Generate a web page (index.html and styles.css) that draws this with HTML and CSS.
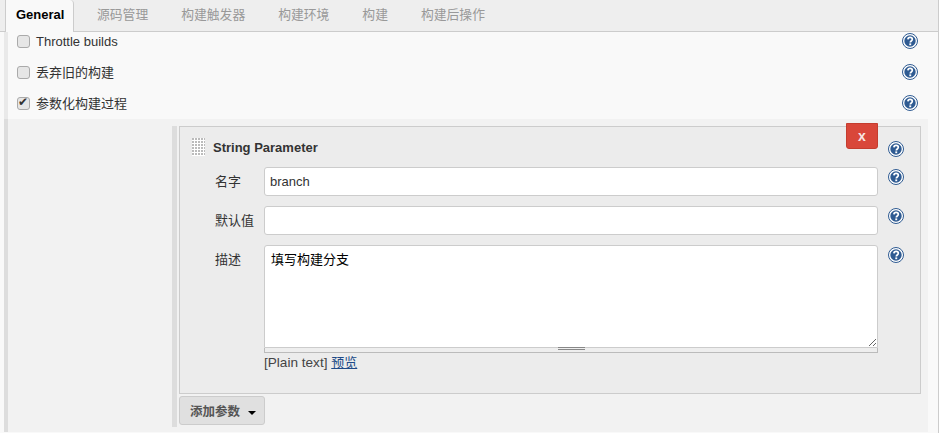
FILE: index.html
```html
<!DOCTYPE html>
<html lang="zh">
<head>
<meta charset="utf-8">
<title>General</title>
<link rel="stylesheet" href="styles.css">
</head>
<body>
<svg class="defs" width="0" height="0" aria-hidden="true">
  <symbol id="help" viewBox="0 0 16 16">
    <circle cx="8" cy="8" r="7.5" fill="#fff" stroke="#2f5b92"/>
    <circle cx="8" cy="8" r="5.7" fill="#2f5b92"/>
    <path d="M5.9 6.4C6 5 7 4.4 8.1 4.4c1.3 0 2.2.8 2.2 1.9 0 1.7-2 1.6-2 3.2" fill="none" stroke="#fff" stroke-width="1.7"/>
    <rect x="7.3" y="10.4" width="1.9" height="1.8" fill="#fff"/>
  </symbol>
</svg>
<div class="page">
  <nav class="tabs">
    <a class="tab active">General</a>
    <a class="tab">源码管理</a>
    <a class="tab">构建触发器</a>
    <a class="tab">构建环境</a>
    <a class="tab">构建</a>
    <a class="tab">构建后操作</a>
  </nav>
  <div class="content">
    <div class="opts">
      <div class="opt">
        <label class="check"><input type="checkbox"><span>Throttle builds</span></label>
        <svg class="help"><use href="#help"/></svg>
      </div>
      <div class="opt">
        <label class="check"><input type="checkbox"><span>丢弃旧的构建</span></label>
        <svg class="help"><use href="#help"/></svg>
      </div>
      <div class="opt">
        <label class="check"><input type="checkbox" checked><span>参数化构建过程</span></label>
        <svg class="help"><use href="#help"/></svg>
      </div>
    </div>
    <section class="params">
      <div class="repeat">
        <div class="card">
          <div class="card-head">
            <span class="grip"></span>
            <b class="card-title">String Parameter</b>
            <button class="del">x</button>
            <svg class="help"><use href="#help"/></svg>
          </div>
          <div class="field">
            <span class="name">名字</span>
            <input class="text" type="text" value="branch">
            <svg class="help"><use href="#help"/></svg>
          </div>
          <div class="field">
            <span class="name">默认值</span>
            <input class="text" type="text">
            <svg class="help"><use href="#help"/></svg>
          </div>
          <div class="field area-field">
            <span class="name">描述</span>
            <div class="area-wrap">
              <textarea class="area">填写构建分支</textarea>
              <div class="grabber"><i></i></div>
              <div class="format">[Plain text] <a href="#">预览</a></div>
            </div>
            <svg class="help"><use href="#help"/></svg>
          </div>
        </div>
        <button class="add">添加参数<i class="caret"></i></button>
      </div>
    </section>
  </div>
</div>
</body>
</html>
```
FILE: styles.css
```css
* { box-sizing: border-box; }
html, body { margin: 0; height: 100%; background: #fff; overflow: hidden; }
body { font: 13px "Liberation Sans", "Noto Sans CJK SC", sans-serif; color: #333; }
.defs { position: absolute; }
.page { width: 939px; height: 433px; border-right: 1px solid #ccc; background: #f9f9f9; }
.tabs { display: flex; height: 32px; padding-left: 5px; background: #eee; border-bottom: 1px solid #ccc; }
.tab { height: 32px; padding: 7px 11px 0; margin-right: 11px; font-size: 12.8px; line-height: 16px; color: #999; }
.tab.active { width: 69px; margin-right: 12px; padding: 7px 0 0 10px; background: #f9f9f9; border: 1px solid #ccc; border-bottom: 0; border-top: 0; border-radius: 0 4px 0 0; color: #000; font-size: 13px; font-weight: bold; }
.content { height: 400px; padding-left: 4px; }
.opts { display: flex; flex-direction: column; gap: 6px; height: 87px; padding: 0 20px 0 9px; border-left: 4px solid #e9e9e9; }
.opt { display: flex; align-items: flex-start; justify-content: space-between; height: 25px; padding-top: 1px; }
.check { display: flex; align-items: flex-start; line-height: 17px; }
.check input { appearance: none; position: relative; width: 13px; height: 13px; margin: 2px 6px 0 0; border: 1px solid #aaa; border-radius: 3px; background: #e6e6e6; }
.check input:checked::after { content: "✔"; position: absolute; left: 0; top: -3px; font: 12px/14px "DejaVu Sans", sans-serif; color: #333; }
.help { width: 16px; height: 16px; flex: none; }
.params { height: 313px; margin-right: 10px; padding: 7px 0 0 164px; background: #f2f2f2; border-left: 4px solid #ddd; }
.repeat { height: 301px; width: 749px; padding-left: 2px; border-left: 5px solid #ddd; }
.card { width: 742px; height: 268px; border: 1px solid #ccc; background: #ececec; position: relative; }
.card-head { display: flex; align-items: center; height: 40px; padding-left: 12px; }
.grip { width: 13px; height: 18px; margin-right: 8px; background-color: #fff; background-image: linear-gradient(90deg, transparent 2px, #fff 2px), linear-gradient(#bbb 2px, #fff 2px); background-size: 3px 3px; }
.card-title { font-size: 13px; color: #333; }
.del { position: absolute; top: -4px; right: 42px; width: 32px; height: 26px; border: 1px solid #c43d2f; border-radius: 0 0 3px 3px; background: #d9473a; color: #f7e6e3; font: bold 14px "Liberation Sans", sans-serif; padding: 0; }
.card-head .help { position: absolute; top: 14px; right: 16px; }
.field { display: flex; height: 39px; padding-left: 35px; }
.name { width: 49px; padding-top: 4px; font-size: 13px; }
.text { width: 614px; height: 29px; border: 1px solid #ccc; border-radius: 3px; padding: 0 5px; font: 13px "Liberation Sans", sans-serif; color: #333; background: #fff; }
.field .help { margin: 2px 0 0 10px; }
.area-wrap { width: 614px; }
.area { display: block; width: 614px; height: 103px; border: 1px solid #ccc; border-radius: 3px 3px 0 0; padding: 3px 6px; font: 13px "Liberation Sans", "Noto Sans CJK SC", sans-serif; color: #000; background: #fff; }
.grabber { height: 5px; background: #eee; border: 1px solid #bbb; border-top: 0; display: flex; justify-content: center; }
.grabber i { display: block; width: 27px; height: 3px; border-top: 1px solid #888; border-bottom: 1px solid #888; margin-top: -1px; }
.format { margin-top: 2px; font-size: 13.6px; line-height: 16px; color: #444; }
.format a { font-size: 13px; color: #204a87; }
.add { display: block; margin-top: 2px; width: 86px; height: 29px; border: 1px solid #ccc; border-radius: 3px; background: #e0e0e0; color: #555; font: bold 12.5px "Liberation Sans", "Noto Sans CJK SC", sans-serif; padding: 0 0 0 10px; text-align: left; }
.caret { display: inline-block; margin-left: 8px; vertical-align: middle; border: 4px solid transparent; border-top-color: #000; border-bottom: 0; }
```
